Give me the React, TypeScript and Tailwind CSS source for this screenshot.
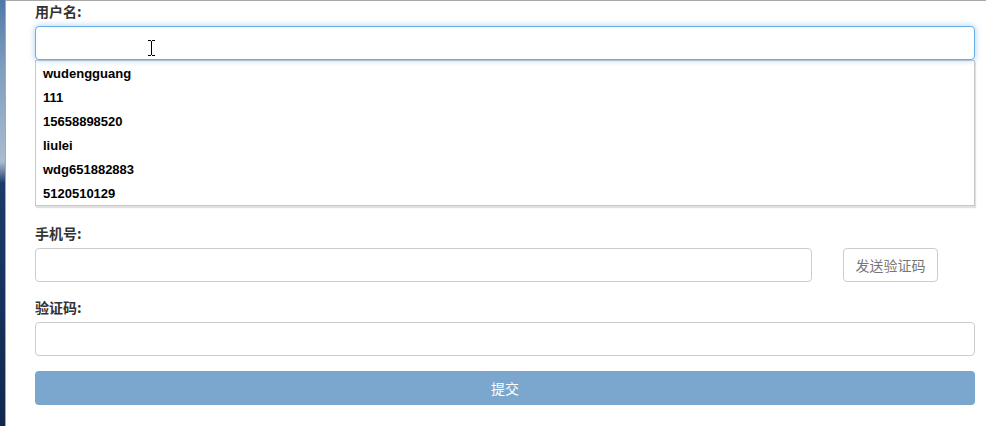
import React from 'react';

const cjk = { fontFamily: '"Noto Sans CJK SC", "Noto Sans", sans-serif' };

const history = ['wudengguang', '111', '15658898520', 'liulei', 'wdg651882883', '5120510129'];

function Label({ text }: { text: string }) {
  return (
    <label className="block h-5 leading-5 mb-[5px] text-[14px] font-bold text-[#333]" style={cjk}>
      {text}
    </label>
  );
}

function IBeam() {
  return (
    <svg width="9" height="16" viewBox="0 0 9 16" className="absolute left-[112px] top-[14px] pointer-events-none">
      <path d="M1 0.5h3M5 0.5h3M1 15.5h3M5 15.5h3M4.5 1v14" stroke="#000" strokeWidth="1" fill="none" />
    </svg>
  );
}

export default function App() {
  return (
    <div className="flex h-[426px] w-[986px] overflow-hidden bg-white">
      {/* background photo strip on the left */}
      <div className="w-[5px] shrink-0 bg-[linear-gradient(to_bottom,#4f78a6_0%,#7d9cbd_15%,#a9bccf_38%,#1d3a68_43%,#17325d_70%,#10284c_100%)]" />

      <div className="flex-1 border-l border-t border-[#a8a8a8] pl-[29px] pr-[11px] pt-0">
        {/* username */}
        <Label text="用户名:" />
        <div className="relative">
          <input
            className="block w-full h-[34px] rounded-[4px] border border-[#66afe9] shadow-[0_0_6px_rgba(102,175,233,0.6)] outline-none px-3 bg-white"
            defaultValue=""
          />
          <IBeam />
        </div>
        <ul className="border border-[#c8c8c8] bg-white shadow-[1px_2px_1px_rgba(0,0,0,0.12)]">
          {history.map((h) => (
            <li
              key={h}
              className="h-6 leading-[25px] pl-[7px] text-[13px] font-bold text-black"
              style={{ fontFamily: '"Liberation Sans", Arial, sans-serif' }}
            >
              {h}
            </li>
          ))}
        </ul>

        {/* phone */}
        <div className="mt-[17px]">
          <Label text="手机号:" />
          <div className="flex items-center gap-[31px]">
            <input className="block w-[777px] h-[34px] rounded-[4px] border border-[#ccc] outline-none px-3" />
            <button
              className="w-[95px] h-[34px] rounded-[4px] border border-[#ccc] bg-white text-[14px] text-[#777]"
              style={cjk}
            >
              发送验证码
            </button>
          </div>
        </div>

        {/* code */}
        <div className="mt-[15px]">
          <Label text="验证码:" />
          <input className="block w-full h-[34px] rounded-[4px] border border-[#ccc] outline-none px-3" />
        </div>

        <button
          className="mt-[15px] block w-full h-[34px] rounded-[4px] bg-[#7ba7ce] text-white text-[14px]"
          style={cjk}
        >
          提交
        </button>
      </div>
    </div>
  );
}
